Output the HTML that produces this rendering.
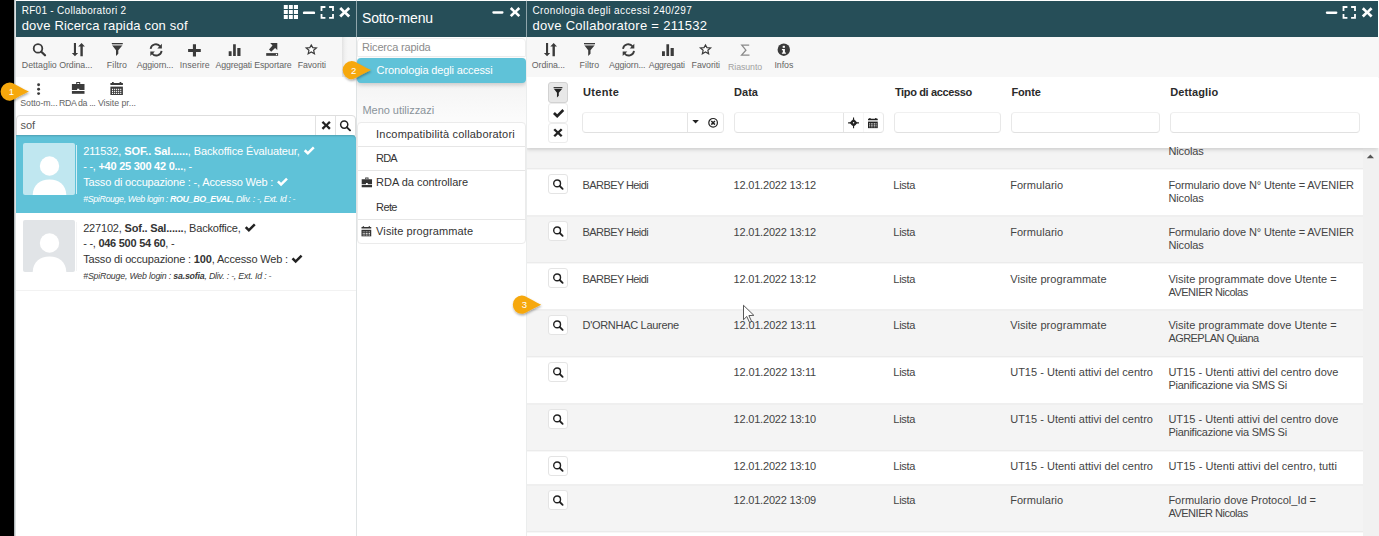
<!DOCTYPE html>
<html>
<head>
<meta charset="utf-8">
<title>Cronologia degli accessi</title>
<style>
*{box-sizing:border-box;margin:0;padding:0}
html,body{width:1379px;height:536px;overflow:hidden;background:#fff;font-family:"Liberation Sans",sans-serif}
#root{position:absolute;left:0;top:0;width:1379px;height:536px;overflow:hidden}
#root>div{position:absolute}
.t{white-space:nowrap;line-height:normal}
.t b{font-weight:700}
#ov{position:absolute;left:0;top:0}
</style>
</head>
<body>
<div id="root">
<div style="left:0px;top:0px;width:14px;height:536px;background:#000;"></div>
<div style="left:14px;top:0px;width:1px;height:536px;background:#b4babc;"></div>
<div style="left:15px;top:0px;width:1px;height:536px;background:#dde1e2;"></div>
<div style="left:16px;top:37px;width:341px;height:499px;background:#fff;"></div>
<div style="left:16px;top:1px;width:340px;height:36px;background:#264e58;"></div>
<div style="left:342px;top:37px;width:14px;height:40px;background:linear-gradient(90deg,#e2e2e2,#f1f1f1 3px,#f6f6f6 6px);"></div>
<div style="left:16px;top:37px;width:326px;height:40px;background:#f7f7f7;"></div>
<div style="left:16px;top:115px;width:340px;height:21px;background:#fff;border:1px solid #dedede;border-radius:4px 4px 0 0;"></div>
<div style="left:315px;top:116px;width:1px;height:19px;background:#e2e2e2;"></div>
<div style="left:335px;top:116px;width:1px;height:19px;background:#e2e2e2;"></div>
<div style="left:16px;top:135px;width:340px;height:78px;background:linear-gradient(#5fc2d8,#5fc2d8);border-radius:0 4px 0 0;box-shadow:inset 0 2px 2px -1px rgba(0,0,0,.18);"></div>
<div style="left:23px;top:143px;width:52px;height:52px;background:#c0e7f0;border-radius:2px;"></div>
<div style="left:76px;top:145px;width:1px;height:49px;background:#d4eef5;"></div>
<div style="left:16px;top:290px;width:340px;height:1px;background:#f2f2f2;"></div>
<div style="left:23px;top:220px;width:52px;height:52px;background:#e1e4e7;border-radius:2px;"></div>
<div style="left:76px;top:222px;width:1px;height:49px;background:#f3f4f5;"></div>
<div style="left:356px;top:0px;width:1px;height:536px;background:#dfe3e4;"></div>
<div style="left:356px;top:1px;width:1px;height:36px;background:#8fa5ab;"></div>
<div style="left:357px;top:1px;width:169px;height:36px;background:#264e58;"></div>
<div style="left:357px;top:82px;width:169px;height:42px;background:linear-gradient(#f4f4f4,#fcfcfc);"></div>
<div style="left:357px;top:38px;width:169px;height:19px;background:#fff;border:1px solid #eeeeee;border-radius:4px 4px 0 0;"></div>
<div style="left:357px;top:58px;width:169px;height:25px;background:#5fc2d8;border-radius:4px;box-shadow:0 2px 4px rgba(0,0,0,.18);"></div>
<div style="left:357px;top:122px;width:169px;height:122px;background:#fff;border:1px solid #ebebeb;border-radius:4px;"></div>
<div style="left:358px;top:146px;width:167px;height:1px;background:#e6e6e6;"></div>
<div style="left:358px;top:170px;width:167px;height:1px;background:#e6e6e6;"></div>
<div style="left:358px;top:219px;width:167px;height:1px;background:#e6e6e6;"></div>
<div style="left:526px;top:0px;width:1px;height:536px;background:#ebeded;"></div>
<div style="left:526px;top:1px;width:1px;height:36px;background:#8fa5ab;"></div>
<div style="left:527px;top:1px;width:851px;height:36px;background:#264e58;"></div>
<div style="left:527px;top:37px;width:852px;height:41px;background:#f7f7f7;"></div>
<div style="left:527px;top:148px;width:836px;height:20px;background:#f4f4f4;border-top:2px solid #efefef;"></div>
<div style="left:527px;top:168px;width:836px;height:47px;background:#fff;border-top:1px solid #ebebeb;box-shadow:inset 0 1px 0 #f7f7f7;"></div>
<div style="left:527px;top:215px;width:836px;height:47px;background:#f4f4f4;border-top:2px solid #efefef;"></div>
<div style="left:527px;top:262px;width:836px;height:47px;background:#fff;border-top:1px solid #ebebeb;box-shadow:inset 0 1px 0 #f7f7f7;"></div>
<div style="left:527px;top:309px;width:836px;height:47px;background:#f4f4f4;border-top:2px solid #efefef;"></div>
<div style="left:527px;top:356px;width:836px;height:47px;background:#fff;border-top:1px solid #ebebeb;box-shadow:inset 0 1px 0 #f7f7f7;"></div>
<div style="left:527px;top:403px;width:836px;height:47px;background:#f4f4f4;border-top:2px solid #efefef;"></div>
<div style="left:527px;top:450px;width:836px;height:34px;background:#fff;border-top:1px solid #ebebeb;box-shadow:inset 0 1px 0 #f7f7f7;"></div>
<div style="left:527px;top:484px;width:836px;height:47px;background:#f4f4f4;border-top:2px solid #efefef;"></div>
<div style="left:527px;top:531px;width:836px;height:5px;background:#fff;border-top:1px solid #ebebeb;box-shadow:inset 0 1px 0 #f7f7f7;"></div>
<div style="left:1363px;top:148px;width:16px;height:388px;background:#f1f1f1;"></div>
<div style="left:548px;top:174px;width:20px;height:20px;background:#fff;border:1px solid #e4e4e4;border-radius:3px;"></div>
<div style="left:548px;top:221px;width:20px;height:20px;background:#fff;border:1px solid #e4e4e4;border-radius:3px;"></div>
<div style="left:548px;top:268px;width:20px;height:20px;background:#fff;border:1px solid #e4e4e4;border-radius:3px;"></div>
<div style="left:548px;top:315px;width:20px;height:20px;background:#fff;border:1px solid #e4e4e4;border-radius:3px;"></div>
<div style="left:548px;top:362px;width:20px;height:20px;background:#fff;border:1px solid #e4e4e4;border-radius:3px;"></div>
<div style="left:548px;top:409px;width:20px;height:20px;background:#fff;border:1px solid #e4e4e4;border-radius:3px;"></div>
<div style="left:548px;top:456px;width:20px;height:20px;background:#fff;border:1px solid #e4e4e4;border-radius:3px;"></div>
<div style="left:548px;top:490px;width:20px;height:20px;background:#fff;border:1px solid #e4e4e4;border-radius:3px;"></div>
<div style="left:548px;top:537px;width:20px;height:20px;background:#fff;border:1px solid #e4e4e4;border-radius:3px;"></div>
<div style="left:527px;top:77px;width:851px;height:71px;background:#fff;box-shadow:0 2px 4px rgba(0,0,0,.13);clip-path:inset(0 0 -10px 0);"></div>
<div style="left:548px;top:82px;width:20px;height:21px;background:#e8e8e8;border:1px solid #d2d2d2;border-radius:3px;"></div>
<div style="left:548px;top:103px;width:20px;height:20px;background:#fff;border:1px solid #ececec;border-radius:3px;"></div>
<div style="left:548px;top:123px;width:20px;height:20px;background:#fff;border:1px solid #ececec;border-radius:3px;"></div>
<div style="left:582px;top:112px;width:142px;height:21px;background:#fff;border:1px solid;border-color:#f0f0f0 #e8e8e8 #e1e1e1 #e8e8e8;border-radius:4px;"></div>
<div style="left:687px;top:113px;width:1px;height:19px;background:#e4e4e4;"></div>
<div style="left:734px;top:112px;width:150px;height:21px;background:#fff;border:1px solid;border-color:#f0f0f0 #e8e8e8 #e1e1e1 #e8e8e8;border-radius:4px;"></div>
<div style="left:843px;top:113px;width:1px;height:19px;background:#e4e4e4;"></div>
<div style="left:863px;top:113px;width:1px;height:19px;background:#f6f6f6;"></div>
<div style="left:894px;top:112px;width:107px;height:21px;background:#fff;border:1px solid;border-color:#f0f0f0 #e8e8e8 #e1e1e1 #e8e8e8;border-radius:4px;"></div>
<div style="left:1011px;top:112px;width:149px;height:21px;background:#fff;border:1px solid;border-color:#f0f0f0 #e8e8e8 #e1e1e1 #e8e8e8;border-radius:4px;"></div>
<div style="left:1170px;top:112px;width:190px;height:21px;background:#fff;border:1px solid;border-color:#f0f0f0 #e8e8e8 #e1e1e1 #e8e8e8;border-radius:4px;"></div>
<div class="t" style="left:21.7px;top:5px;font-size:10px;color:#fff;letter-spacing:0.29px;">RF01 - Collaboratori 2</div>
<div class="t" style="left:21.7px;top:18px;font-size:13px;color:#fff;letter-spacing:0.18px;">dove Ricerca rapida con sof</div>
<div class="t" style="left:362.0px;top:10px;font-size:14px;color:#fff;letter-spacing:-0.14px;">Sotto-menu</div>
<div class="t" style="left:532.4px;top:5px;font-size:10px;color:#fff;letter-spacing:0.39px;">Cronologia degli accessi 240/297</div>
<div class="t" style="left:532.4px;top:18px;font-size:13px;color:#fff;letter-spacing:0.29px;">dove Collaboratore = 211532</div>
<div class="t" style="left:21.8px;top:60px;font-size:8.8px;color:#646464;letter-spacing:0.03px;">Dettaglio</div>
<div class="t" style="left:59.2px;top:60px;font-size:8.8px;color:#646464;letter-spacing:-0.07px;">Ordina...</div>
<div class="t" style="left:106.8px;top:60px;font-size:8.8px;color:#646464;letter-spacing:0.13px;">Filtro</div>
<div class="t" style="left:136.7px;top:60px;font-size:8.8px;color:#646464;letter-spacing:-0.11px;">Aggiorn...</div>
<div class="t" style="left:179.8px;top:60px;font-size:8.8px;color:#646464;letter-spacing:0.07px;">Inserire</div>
<div class="t" style="left:215.4px;top:60px;font-size:8.8px;color:#646464;letter-spacing:-0.13px;">Aggregati</div>
<div class="t" style="left:254.2px;top:60px;font-size:8.8px;color:#646464;letter-spacing:-0.08px;">Esportare</div>
<div class="t" style="left:297.7px;top:60px;font-size:8.8px;color:#646464;letter-spacing:-0.08px;">Favoriti</div>
<div class="t" style="left:20.3px;top:98px;font-size:8.8px;color:#646464;letter-spacing:-0.09px;">Sotto-m...</div>
<div class="t" style="left:59.0px;top:98px;font-size:8.8px;color:#646464;letter-spacing:-0.37px;">RDA da ...</div>
<div class="t" style="left:97.9px;top:98px;font-size:8.8px;color:#646464;letter-spacing:-0.03px;">Visite pr...</div>
<div class="t" style="left:531.8px;top:60px;font-size:8.8px;color:#646464;letter-spacing:-0.07px;">Ordina...</div>
<div class="t" style="left:579.6px;top:60px;font-size:8.8px;color:#646464;letter-spacing:0.01px;">Filtro</div>
<div class="t" style="left:609.0px;top:60px;font-size:8.8px;color:#646464;letter-spacing:-0.13px;">Aggiorn...</div>
<div class="t" style="left:648.7px;top:60px;font-size:8.8px;color:#646464;letter-spacing:-0.17px;">Aggregati</div>
<div class="t" style="left:691.6px;top:60px;font-size:8.8px;color:#646464;letter-spacing:-0.06px;">Favoriti</div>
<div class="t" style="left:774.4px;top:60px;font-size:8.8px;color:#646464;letter-spacing:-0.04px;">Infos</div>
<div class="t" style="left:728.0px;top:62px;font-size:8.8px;color:#a2a2a2;letter-spacing:-0.08px;">Riasunto</div>
<div class="t" style="left:20.6px;top:119px;font-size:11px;color:#555;letter-spacing:-0.09px;">sof</div>
<div class="t" style="left:83.2px;top:145px;font-size:11px;color:#fff;letter-spacing:-0.12px;">211532, <b>SOF.. Sal......</b>, Backoffice Évaluateur,</div>
<div class="t" style="left:83.2px;top:160px;font-size:11px;color:#fff;letter-spacing:-0.25px;">- -, <b>+40 25 300 42 0...</b>, -</div>
<div class="t" style="left:83.2px;top:176px;font-size:11px;color:#fff;letter-spacing:-0.17px;">Tasso di occupazione : -, Accesso Web :</div>
<div class="t" style="left:83.2px;top:194px;font-size:8.8px;color:#fff;font-style:italic;letter-spacing:-0.34px;">#SpiRouge, Web login : <b>ROU_BO_EVAL</b>, Dliv. : -, Ext. Id : -</div>
<div class="t" style="left:83.2px;top:222px;font-size:11px;color:#333;letter-spacing:-0.19px;">227102, <b>Sof.. Sal......</b>, Backoffice,</div>
<div class="t" style="left:83.2px;top:237px;font-size:11px;color:#333;letter-spacing:-0.26px;">- -, <b>046 500 54 60</b>, -</div>
<div class="t" style="left:83.2px;top:253px;font-size:11px;color:#333;letter-spacing:-0.16px;">Tasso di occupazione : <b>100</b>, Accesso Web :</div>
<div class="t" style="left:83.2px;top:271px;font-size:8.8px;color:#3a3a3a;font-style:italic;letter-spacing:-0.20px;">#SpiRouge, Web login : <b>sa.sofia</b>, Dliv. : -, Ext. Id : -</div>
<div class="t" style="left:362.0px;top:41px;font-size:11px;color:#8c8c8c;letter-spacing:-0.17px;">Ricerca rapida</div>
<div class="t" style="left:376.6px;top:64px;font-size:11px;color:#fff;letter-spacing:-0.14px;">Cronologia degli accessi</div>
<div class="t" style="left:362.5px;top:104px;font-size:11px;color:#8a949b;letter-spacing:-0.04px;">Meno utilizzazi</div>
<div class="t" style="left:376.1px;top:128px;font-size:11px;color:#333;letter-spacing:0.19px;">Incompatibilità collaboratori</div>
<div class="t" style="left:376.1px;top:152px;font-size:11px;color:#333;letter-spacing:-0.82px;">RDA</div>
<div class="t" style="left:376.1px;top:176px;font-size:11px;color:#333;letter-spacing:-0.02px;">RDA da controllare</div>
<div class="t" style="left:376.1px;top:201px;font-size:11px;color:#333;letter-spacing:-0.62px;">Rete</div>
<div class="t" style="left:376.1px;top:225px;font-size:11px;color:#333;letter-spacing:0.11px;">Visite programmate</div>
<div class="t" style="left:583.0px;top:86px;font-size:11px;color:#2b2b2b;font-weight:700;letter-spacing:0.31px;">Utente</div>
<div class="t" style="left:734.0px;top:86px;font-size:11px;color:#2b2b2b;font-weight:700;letter-spacing:0.05px;">Data</div>
<div class="t" style="left:894.9px;top:86px;font-size:11px;color:#2b2b2b;font-weight:700;letter-spacing:-0.35px;">Tipo di accesso</div>
<div class="t" style="left:1011.5px;top:86px;font-size:11px;color:#2b2b2b;font-weight:700;letter-spacing:-0.16px;">Fonte</div>
<div class="t" style="left:1170.3px;top:86px;font-size:11px;color:#2b2b2b;font-weight:700;letter-spacing:0.10px;">Dettaglio</div>
<div class="t" style="left:582.5px;top:179px;font-size:11px;color:#444;letter-spacing:-0.58px;">BARBEY Heidi</div>
<div class="t" style="left:733.6px;top:179px;font-size:11px;color:#444;letter-spacing:-0.20px;">12.01.2022 13:12</div>
<div class="t" style="left:893.3px;top:179px;font-size:11px;color:#444;letter-spacing:-0.26px;">Lista</div>
<div class="t" style="left:1010.2px;top:179px;font-size:11px;color:#444;letter-spacing:0.05px;">Formulario</div>
<div class="t" style="left:1168.4px;top:179px;font-size:11px;color:#444;letter-spacing:-0.12px;">Formulario dove N° Utente = AVENIER</div>
<div class="t" style="left:1168.4px;top:192px;font-size:11px;color:#444;letter-spacing:-0.13px;">Nicolas</div>
<div class="t" style="left:582.5px;top:226px;font-size:11px;color:#444;letter-spacing:-0.58px;">BARBEY Heidi</div>
<div class="t" style="left:733.6px;top:226px;font-size:11px;color:#444;letter-spacing:-0.20px;">12.01.2022 13:12</div>
<div class="t" style="left:893.3px;top:226px;font-size:11px;color:#444;letter-spacing:-0.26px;">Lista</div>
<div class="t" style="left:1010.2px;top:226px;font-size:11px;color:#444;letter-spacing:0.05px;">Formulario</div>
<div class="t" style="left:1168.4px;top:226px;font-size:11px;color:#444;letter-spacing:-0.12px;">Formulario dove N° Utente = AVENIER</div>
<div class="t" style="left:1168.4px;top:239px;font-size:11px;color:#444;letter-spacing:-0.13px;">Nicolas</div>
<div class="t" style="left:582.5px;top:273px;font-size:11px;color:#444;letter-spacing:-0.58px;">BARBEY Heidi</div>
<div class="t" style="left:733.6px;top:273px;font-size:11px;color:#444;letter-spacing:-0.20px;">12.01.2022 13:12</div>
<div class="t" style="left:893.3px;top:273px;font-size:11px;color:#444;letter-spacing:-0.26px;">Lista</div>
<div class="t" style="left:1010.2px;top:273px;font-size:11px;color:#444;letter-spacing:0.07px;">Visite programmate</div>
<div class="t" style="left:1168.4px;top:273px;font-size:11px;color:#444;letter-spacing:0.04px;">Visite programmate dove Utente =</div>
<div class="t" style="left:1168.4px;top:286px;font-size:11px;color:#444;letter-spacing:-0.49px;">AVENIER Nicolas</div>
<div class="t" style="left:582.5px;top:319px;font-size:11px;color:#444;letter-spacing:-0.30px;">D'ORNHAC Laurene</div>
<div class="t" style="left:733.6px;top:319px;font-size:11px;color:#444;letter-spacing:-0.15px;">12.01.2022 13:11</div>
<div class="t" style="left:893.3px;top:319px;font-size:11px;color:#444;letter-spacing:-0.26px;">Lista</div>
<div class="t" style="left:1010.2px;top:319px;font-size:11px;color:#444;letter-spacing:0.07px;">Visite programmate</div>
<div class="t" style="left:1168.4px;top:319px;font-size:11px;color:#444;letter-spacing:0.04px;">Visite programmate dove Utente =</div>
<div class="t" style="left:1168.4px;top:332px;font-size:11px;color:#444;letter-spacing:-0.55px;">AGREPLAN Quiana</div>
<div class="t" style="left:733.6px;top:366px;font-size:11px;color:#444;letter-spacing:-0.15px;">12.01.2022 13:11</div>
<div class="t" style="left:893.3px;top:366px;font-size:11px;color:#444;letter-spacing:-0.26px;">Lista</div>
<div class="t" style="left:1010.2px;top:366px;font-size:11px;color:#444;letter-spacing:0.01px;">UT15 - Utenti attivi del centro</div>
<div class="t" style="left:1168.4px;top:366px;font-size:11px;color:#444;letter-spacing:0.02px;">UT15 - Utenti attivi del centro dove</div>
<div class="t" style="left:1168.4px;top:379px;font-size:11px;color:#444;letter-spacing:-0.25px;">Pianificazione via SMS Si</div>
<div class="t" style="left:733.6px;top:413px;font-size:11px;color:#444;letter-spacing:-0.20px;">12.01.2022 13:10</div>
<div class="t" style="left:893.3px;top:413px;font-size:11px;color:#444;letter-spacing:-0.26px;">Lista</div>
<div class="t" style="left:1010.2px;top:413px;font-size:11px;color:#444;letter-spacing:0.01px;">UT15 - Utenti attivi del centro</div>
<div class="t" style="left:1168.4px;top:413px;font-size:11px;color:#444;letter-spacing:0.02px;">UT15 - Utenti attivi del centro dove</div>
<div class="t" style="left:1168.4px;top:426px;font-size:11px;color:#444;letter-spacing:-0.25px;">Pianificazione via SMS Si</div>
<div class="t" style="left:733.6px;top:460px;font-size:11px;color:#444;letter-spacing:-0.20px;">12.01.2022 13:10</div>
<div class="t" style="left:893.3px;top:460px;font-size:11px;color:#444;letter-spacing:-0.26px;">Lista</div>
<div class="t" style="left:1010.2px;top:460px;font-size:11px;color:#444;letter-spacing:0.01px;">UT15 - Utenti attivi del centro</div>
<div class="t" style="left:1168.4px;top:460px;font-size:11px;color:#444;letter-spacing:0.06px;">UT15 - Utenti attivi del centro, tutti</div>
<div class="t" style="left:733.6px;top:494px;font-size:11px;color:#444;letter-spacing:-0.20px;">12.01.2022 13:09</div>
<div class="t" style="left:893.3px;top:494px;font-size:11px;color:#444;letter-spacing:-0.26px;">Lista</div>
<div class="t" style="left:1010.2px;top:494px;font-size:11px;color:#444;letter-spacing:0.05px;">Formulario</div>
<div class="t" style="left:1168.4px;top:494px;font-size:11px;color:#444;">Formulario dove Protocol_Id =</div>
<div class="t" style="left:1168.4px;top:507px;font-size:11px;color:#444;letter-spacing:-0.49px;">AVENIER Nicolas</div>
<div class="t" style="left:1168.4px;top:145px;font-size:11px;color:#444;letter-spacing:-0.13px;">Nicolas</div>
<svg id="ov" width="1379" height="536" viewBox="0 0 1379 536">
<defs>
<filter id="bsh" x="-20%" y="-20%" width="150%" height="160%"><feDropShadow dx="0.5" dy="1.5" stdDeviation="1.2" flood-color="#000" flood-opacity="0.35"/></filter>
<clipPath id="avc1"><rect x="0" y="0" width="52" height="52"/></clipPath>
<clipPath id="avc2"><rect x="0" y="0" width="52" height="52"/></clipPath>
</defs>
<g transform="translate(283.80 4.90)" fill="#fff" stroke="#fff" ><g stroke="none"><path d="M0 0h4v4H0zM5.1 0h3.9v4H5.1zM10.1 0h4.1v4h-4.1zM0 5.1h4v3.9H0zM5.1 5.1h3.9v3.9H5.1zM10.1 5.1h4.1v3.9h-4.1zM0 10.1h4v3.9H0zM5.1 10.1h3.9v3.9H5.1zM10.1 10.1h4.1v3.9h-4.1z"/></g></g>
<g transform="translate(302.90 11.30)" fill="#fff" stroke="#fff" ><g stroke="none"><rect x="0" y="0.1" width="12.2" height="2.7" rx="1.2"/></g></g>
<g transform="translate(320.60 6.10)" fill="#fff" stroke="#fff" ><g fill="none" stroke-width="1.8"><path d="M0.9 4.8V0.9h3.9M8.5 0.9h3.9v3.9M12.4 7.9v3.9H8.5M4.8 11.8H0.9V7.9"/></g></g>
<g transform="translate(339.20 7.00)" fill="#fff" stroke="#fff" ><g stroke="none"><path d="M0 2L2 0L5.5 3.5L9 0L11 2L7.5 5.2L11 8.5L9 10.4L5.5 7L2 10.4L0 8.5L3.5 5.2z"/></g></g>
<g transform="translate(492.30 11.10) scale(0.92)" fill="#fff" stroke="#fff" ><g stroke="none"><rect x="0" y="0.1" width="12.2" height="2.7" rx="1.2"/></g></g>
<g transform="translate(509.80 7.10) scale(0.95)" fill="#fff" stroke="#fff" ><g stroke="none"><path d="M0 2L2 0L5.5 3.5L9 0L11 2L7.5 5.2L11 8.5L9 10.4L5.5 7L2 10.4L0 8.5L3.5 5.2z"/></g></g>
<g transform="translate(1325.80 11.30) scale(0.95)" fill="#fff" stroke="#fff" ><g stroke="none"><rect x="0" y="0.1" width="12.2" height="2.7" rx="1.2"/></g></g>
<g transform="translate(1342.60 6.10)" fill="#fff" stroke="#fff" ><g fill="none" stroke-width="1.8"><path d="M0.9 4.8V0.9h3.9M8.5 0.9h3.9v3.9M12.4 7.9v3.9H8.5M4.8 11.8H0.9V7.9"/></g></g>
<g transform="translate(1361.80 7.20) scale(0.98)" fill="#fff" stroke="#fff" ><g stroke="none"><path d="M0 2L2 0L5.5 3.5L9 0L11 2L7.5 5.2L11 8.5L9 10.4L5.5 7L2 10.4L0 8.5L3.5 5.2z"/></g></g>
<g transform="translate(32.80 43.10)" fill="#3b3b3b" stroke="#3b3b3b" ><g><circle cx="5.2" cy="5.3" r="4.3" fill="none" stroke-width="1.8"/><path d="M8.5 8.6L12.2 12.2" fill="none" stroke-width="2.3" stroke-linecap="round"/></g></g>
<g transform="translate(71.90 43.00)" fill="#3b3b3b" stroke="#3b3b3b" ><g stroke="none"><path d="M2 0.1h2.1v9.8h2.1L3.05 13.2L-0.1 9.9H2z"/><path d="M8.5 13.2V3.6H6.3L9.65 0L13 3.6h-2.1v9.6z"/></g></g>
<g transform="translate(111.80 43.00)" fill="#3b3b3b" stroke="#3b3b3b" ><g stroke="none"><path d="M0 0h11v1.1H0z"/><path d="M0.2 1.1h10.6v1.3H0.2z" opacity=".3"/><path d="M0.5 2.4h10L6.5 7.2v3.6L4.2 13V7.2z"/></g></g>
<g transform="translate(149.60 43.60)" fill="#3b3b3b" stroke="#3b3b3b" ><g fill="none" stroke-width="1.8"><path d="M1 5.2A5.3 5.3 0 0 1 10.6 3"/><path d="M12 7.2A5.3 5.3 0 0 1 2.4 9.6"/><path d="M12.3 0.2v4.6H7.7z" stroke="none" fill="#3b3b3b"/><path d="M0.7 12.4V7.8h4.6z" stroke="none" fill="#3b3b3b"/></g></g>
<g transform="translate(188.10 44.30)" fill="#3b3b3b" stroke="#3b3b3b" ><g stroke="none"><path d="M4.8 0h3.1v4.7h4.8v3H7.9v4.6H4.8V7.7H0v-3h4.8z"/></g></g>
<g transform="translate(228.50 44.30)" fill="#3b3b3b" stroke="#3b3b3b" ><g stroke="none"><path d="M0.2 7h2.9v4.8H0.2zM4.6 0h2.7v11.8H4.6zM8.8 3.6h3.2v8.2H8.8z"/></g></g>
<g transform="translate(266.20 43.00)" fill="#3b3b3b" stroke="#3b3b3b" ><g stroke="none"><path d="M4 0h7.1v7.1L8.9 4.9L5 8.8L2.8 6.6L6.3 2.6z"/><path d="M0 10.1h11.9v2.7H0z"/><circle cx="10.3" cy="11.45" r="0.7" fill="#fff"/></g></g>
<g transform="translate(305.10 43.30)" fill="#3b3b3b" stroke="#3b3b3b" ><g><path d="M6.2 1.7l1.45 2.6l3.65 0.35l-2.75 2.35l0.8 3.55L6.2 8.7l-3.15 1.85l0.8-3.55L1.1 4.65l3.65-0.35z" fill="#fff" stroke-width="1.2" stroke-linejoin="miter"/></g></g>
<g transform="translate(37.00 83.10)" fill="#3b3b3b" stroke="#3b3b3b" ><g stroke="none"><circle cx="1.6" cy="1.7" r="1.45"/><circle cx="1.6" cy="6.1" r="1.45"/><circle cx="1.6" cy="10.5" r="1.45"/></g></g>
<g transform="translate(71.90 82.00)" fill="#3b3b3b" stroke="#3b3b3b" ><g stroke="none"><path d="M0 2.1h12.6v6H7.4V6.7H5.2v1.4H0z"/><path d="M0 9h12.6v2.8H0z"/><path d="M4.3 2.1V0h4v2.1h-1V1h-2v1.1z"/></g></g>
<g transform="translate(110.40 82.00)" fill="#3b3b3b" stroke="#3b3b3b" ><g stroke="none"><path d="M0 0.9h1.6V0h1.7v0.9h5.9V0h1.7v0.9h1.6v2.1H0z"/><path d="M0 4.6h12.5V13H0z"/><g fill="#fff"><path d="M1.6 6.8h1.1v1.1H1.6zM3.7 6.8h1.1v1.1H3.7zM5.7 6.8h1.1v1.1H5.7zM7.7 6.8h1.1v1.1H7.7zM9.8 6.8h1.1v1.1H9.8zM1.6 8.8h1.1v1.1H1.6zM3.7 8.8h1.1v1.1H3.7zM5.7 8.8h1.1v1.1H5.7zM7.7 8.8h1.1v1.1H7.7zM9.8 8.8h1.1v1.1H9.8zM1.6 10.8h1.1v1.1H1.6zM3.7 10.8h1.1v1.1H3.7zM5.7 10.8h1.1v1.1H5.7zM7.7 10.8h1.1v1.1H7.7zM9.8 10.8h1.1v1.1H9.8z"/></g></g></g>
<g transform="translate(544.00 43.00)" fill="#3b3b3b" stroke="#3b3b3b" ><g stroke="none"><path d="M2 0.1h2.1v9.8h2.1L3.05 13.2L-0.1 9.9H2z"/><path d="M8.5 13.2V3.6H6.3L9.65 0L13 3.6h-2.1v9.6z"/></g></g>
<g transform="translate(584.00 43.00)" fill="#3b3b3b" stroke="#3b3b3b" ><g stroke="none"><path d="M0 0h11v1.1H0z"/><path d="M0.2 1.1h10.6v1.3H0.2z" opacity=".3"/><path d="M0.5 2.4h10L6.5 7.2v3.6L4.2 13V7.2z"/></g></g>
<g transform="translate(622.00 43.60)" fill="#3b3b3b" stroke="#3b3b3b" ><g fill="none" stroke-width="1.8"><path d="M1 5.2A5.3 5.3 0 0 1 10.6 3"/><path d="M12 7.2A5.3 5.3 0 0 1 2.4 9.6"/><path d="M12.3 0.2v4.6H7.7z" stroke="none" fill="#3b3b3b"/><path d="M0.7 12.4V7.8h4.6z" stroke="none" fill="#3b3b3b"/></g></g>
<g transform="translate(661.80 44.30)" fill="#3b3b3b" stroke="#3b3b3b" ><g stroke="none"><path d="M0.2 7h2.9v4.8H0.2zM4.6 0h2.7v11.8H4.6zM8.8 3.6h3.2v8.2H8.8z"/></g></g>
<g transform="translate(699.30 43.30)" fill="#3b3b3b" stroke="#3b3b3b" ><g><path d="M6.2 1.7l1.45 2.6l3.65 0.35l-2.75 2.35l0.8 3.55L6.2 8.7l-3.15 1.85l0.8-3.55L1.1 4.65l3.65-0.35z" fill="#fff" stroke-width="1.2" stroke-linejoin="miter"/></g></g>
<g transform="translate(740.40 44.50)" fill="#8a8a8a" stroke="#8a8a8a" ><g fill="none" stroke-width="1.3"><path d="M8.8 0.7H1.4L5.5 5.7L1.2 10.6H9.1"/></g></g>
<g transform="translate(777.60 43.50)" fill="#3b3b3b" stroke="#3b3b3b" ><g stroke="none"><circle cx="6.2" cy="6.2" r="6.2"/><g fill="#fff"><rect x="5.1" y="2.3" width="2.2" height="2"/><path d="M4.3 5.4h3v3.5h1v1.3H4.3V8.9h1V6.7h-1z"/></g></g></g>
<g transform="translate(321.60 121.00) scale(0.83)" fill="#222" stroke="#222" ><g stroke="none"><path d="M0 2L2 0L5.5 3.5L9 0L11 2L7.5 5.2L11 8.5L9 10.4L5.5 7L2 10.4L0 8.5L3.5 5.2z"/></g></g>
<g transform="translate(339.90 120.20) scale(0.83)" fill="#222" stroke="#222" ><g><circle cx="5.2" cy="5.3" r="4.3" fill="none" stroke-width="1.8"/><path d="M8.5 8.6L12.2 12.2" fill="none" stroke-width="2.3" stroke-linecap="round"/></g></g>
<g transform="translate(303.80 146.00) scale(0.97)" fill="#fff" stroke="#fff" ><g stroke="none"><path d="M0 5.3L1.9 3.4L4.2 5.7L9.4 0.5L11.2 2.3L4.2 9.3z"/></g></g>
<g transform="translate(277.00 177.20) scale(0.97)" fill="#fff" stroke="#fff" ><g stroke="none"><path d="M0 5.3L1.9 3.4L4.2 5.7L9.4 0.5L11.2 2.3L4.2 9.3z"/></g></g>
<g transform="translate(244.80 222.90) scale(0.97)" fill="#222" stroke="#222" ><g stroke="none"><path d="M0 5.3L1.9 3.4L4.2 5.7L9.4 0.5L11.2 2.3L4.2 9.3z"/></g></g>
<g transform="translate(291.60 254.20) scale(0.97)" fill="#222" stroke="#222" ><g stroke="none"><path d="M0 5.3L1.9 3.4L4.2 5.7L9.4 0.5L11.2 2.3L4.2 9.3z"/></g></g>
<g transform="translate(361.70 177.60) scale(0.82)" fill="#333" stroke="#333" ><g stroke="none"><path d="M0 2.1h12.6v6H7.4V6.7H5.2v1.4H0z"/><path d="M0 9h12.6v2.8H0z"/><path d="M4.3 2.1V0h4v2.1h-1V1h-2v1.1z"/></g></g>
<g transform="translate(361.50 226.20) scale(0.78)" fill="#333" stroke="#333" ><g stroke="none"><path d="M0 0.9h1.6V0h1.7v0.9h5.9V0h1.7v0.9h1.6v2.1H0z"/><path d="M0 4.6h12.5V13H0z"/><g fill="#fff"><path d="M1.6 6.8h1.1v1.1H1.6zM3.7 6.8h1.1v1.1H3.7zM5.7 6.8h1.1v1.1H5.7zM7.7 6.8h1.1v1.1H7.7zM9.8 6.8h1.1v1.1H9.8zM1.6 8.8h1.1v1.1H1.6zM3.7 8.8h1.1v1.1H3.7zM5.7 8.8h1.1v1.1H5.7zM7.7 8.8h1.1v1.1H7.7zM9.8 8.8h1.1v1.1H9.8zM1.6 10.8h1.1v1.1H1.6zM3.7 10.8h1.1v1.1H3.7zM5.7 10.8h1.1v1.1H5.7zM7.7 10.8h1.1v1.1H7.7zM9.8 10.8h1.1v1.1H9.8z"/></g></g></g>
<g transform="translate(553.60 87.10) scale(0.8)" fill="#222" stroke="#222" ><g stroke="none"><path d="M0 0h11v1.1H0z"/><path d="M0.2 1.1h10.6v1.3H0.2z" opacity=".3"/><path d="M0.5 2.4h10L6.5 7.2v3.6L4.2 13V7.2z"/></g></g>
<g transform="translate(553.00 108.60)" fill="#222" stroke="#222" ><g stroke="none"><path d="M0 5.3L1.9 3.4L4.2 5.7L9.4 0.5L11.2 2.3L4.2 9.3z"/></g></g>
<g transform="translate(553.40 128.40) scale(0.83)" fill="#222" stroke="#222" ><g stroke="none"><path d="M0 2L2 0L5.5 3.5L9 0L11 2L7.5 5.2L11 8.5L9 10.4L5.5 7L2 10.4L0 8.5L3.5 5.2z"/></g></g>
<g transform="translate(692.30 120.00)" fill="#222" stroke="#222" ><g stroke="none"><path d="M0 0h6.6L3.3 3.6z"/></g></g>
<g transform="translate(708.20 117.90)" fill="#222" stroke="#222" ><g><circle cx="4.9" cy="4.9" r="4.3" fill="none" stroke-width="1.2"/><path d="M3.1 3.1L6.7 6.7M6.7 3.1L3.1 6.7" fill="none" stroke-width="1.5"/></g></g>
<g transform="translate(848.10 117.40)" fill="#222" stroke="#222" ><g stroke="none"><path d="M4.9 0h1.1v4.9h4.9v1.1H6v4.9H4.9V6H0V4.9h4.9z"/><path d="M5.45 1.7L7.5 3.4L9.2 5.45L7.5 7.5L5.45 9.2L3.4 7.5L1.7 5.45L3.4 3.4z"/><circle cx="5.45" cy="5.45" r="0.75" fill="#fff"/></g></g>
<g transform="translate(868.00 118.00) scale(0.78)" fill="#222" stroke="#222" ><g stroke="none"><path d="M0 0.9h1.6V0h1.7v0.9h5.9V0h1.7v0.9h1.6v2.1H0z"/><path d="M0 4.6h12.5V13H0z"/><g fill="#fff"><path d="M1.6 6.8h1.1v1.1H1.6zM3.7 6.8h1.1v1.1H3.7zM5.7 6.8h1.1v1.1H5.7zM7.7 6.8h1.1v1.1H7.7zM9.8 6.8h1.1v1.1H9.8zM1.6 8.8h1.1v1.1H1.6zM3.7 8.8h1.1v1.1H3.7zM5.7 8.8h1.1v1.1H5.7zM7.7 8.8h1.1v1.1H7.7zM9.8 8.8h1.1v1.1H9.8zM1.6 10.8h1.1v1.1H1.6zM3.7 10.8h1.1v1.1H3.7zM5.7 10.8h1.1v1.1H5.7zM7.7 10.8h1.1v1.1H7.7zM9.8 10.8h1.1v1.1H9.8z"/></g></g></g>
<g transform="translate(553.00 179.20) scale(0.79)" fill="#222" stroke="#222" ><g><circle cx="5.2" cy="5.3" r="4.3" fill="none" stroke-width="1.8"/><path d="M8.5 8.6L12.2 12.2" fill="none" stroke-width="2.3" stroke-linecap="round"/></g></g>
<g transform="translate(553.00 226.20) scale(0.79)" fill="#222" stroke="#222" ><g><circle cx="5.2" cy="5.3" r="4.3" fill="none" stroke-width="1.8"/><path d="M8.5 8.6L12.2 12.2" fill="none" stroke-width="2.3" stroke-linecap="round"/></g></g>
<g transform="translate(553.00 273.20) scale(0.79)" fill="#222" stroke="#222" ><g><circle cx="5.2" cy="5.3" r="4.3" fill="none" stroke-width="1.8"/><path d="M8.5 8.6L12.2 12.2" fill="none" stroke-width="2.3" stroke-linecap="round"/></g></g>
<g transform="translate(553.00 320.20) scale(0.79)" fill="#222" stroke="#222" ><g><circle cx="5.2" cy="5.3" r="4.3" fill="none" stroke-width="1.8"/><path d="M8.5 8.6L12.2 12.2" fill="none" stroke-width="2.3" stroke-linecap="round"/></g></g>
<g transform="translate(553.00 367.20) scale(0.79)" fill="#222" stroke="#222" ><g><circle cx="5.2" cy="5.3" r="4.3" fill="none" stroke-width="1.8"/><path d="M8.5 8.6L12.2 12.2" fill="none" stroke-width="2.3" stroke-linecap="round"/></g></g>
<g transform="translate(553.00 414.20) scale(0.79)" fill="#222" stroke="#222" ><g><circle cx="5.2" cy="5.3" r="4.3" fill="none" stroke-width="1.8"/><path d="M8.5 8.6L12.2 12.2" fill="none" stroke-width="2.3" stroke-linecap="round"/></g></g>
<g transform="translate(553.00 461.20) scale(0.79)" fill="#222" stroke="#222" ><g><circle cx="5.2" cy="5.3" r="4.3" fill="none" stroke-width="1.8"/><path d="M8.5 8.6L12.2 12.2" fill="none" stroke-width="2.3" stroke-linecap="round"/></g></g>
<g transform="translate(553.00 495.20) scale(0.79)" fill="#222" stroke="#222" ><g><circle cx="5.2" cy="5.3" r="4.3" fill="none" stroke-width="1.8"/><path d="M8.5 8.6L12.2 12.2" fill="none" stroke-width="2.3" stroke-linecap="round"/></g></g>
<g transform="translate(553.00 542.20) scale(0.79)" fill="#222" stroke="#222" ><g><circle cx="5.2" cy="5.3" r="4.3" fill="none" stroke-width="1.8"/><path d="M8.5 8.6L12.2 12.2" fill="none" stroke-width="2.3" stroke-linecap="round"/></g></g>
<g transform="translate(1366.80 154.40)" fill="#555" stroke="#555" ><g stroke="none"><path d="M0 3.8L3.6 0L7.2 3.8z"/></g></g>
<g transform="translate(23.00 143.00)" fill="#fff" stroke="#fff" clip-path="url(#avc1)"><g stroke="none"><circle cx="26.5" cy="23" r="9.7"/><path d="M9.7 52.5c0-10 7-16 16.8-16s16.8 6 16.8 16z"/></g></g>
<g transform="translate(23.00 220.00)" fill="#fff" stroke="#fff" clip-path="url(#avc2)"><g stroke="none"><circle cx="26.5" cy="23" r="9.7"/><path d="M9.7 52.5c0-10 7-16 16.8-16s16.8 6 16.8 16z"/></g></g>
<g transform="translate(0.60 82.50)" fill="#f6a80c" stroke="#f6a80c" filter="url(#bsh)"><g stroke="none"><path d="M9.1 0A9.1 9.1 0 1 0 9.1 18.2C12.5 18.2 15.5 15.3 28.3 9.1C15.5 3 12.5 0 9.1 0z"/></g></g>
<g transform="translate(342.70 61.00)" fill="#f6a80c" stroke="#f6a80c" filter="url(#bsh)"><g stroke="none"><path d="M9.1 0A9.1 9.1 0 1 0 9.1 18.2C12.5 18.2 15.5 15.3 28.3 9.1C15.5 3 12.5 0 9.1 0z"/></g></g>
<g transform="translate(512.80 295.60)" fill="#f6a80c" stroke="#f6a80c" filter="url(#bsh)"><g stroke="none"><path d="M9.1 0A9.1 9.1 0 1 0 9.1 18.2C12.5 18.2 15.5 15.3 28.3 9.1C15.5 3 12.5 0 9.1 0z"/></g></g>
<path d="M743.5 305.3v14.4l3.3-3.2l2.7 5.9l2.1-1l-2.7-5.8l4.9-0.3z" fill="#fff" stroke="#222" stroke-width="0.75" stroke-linejoin="round"/>
</svg>
<div class="t" style="left:8.8px;top:86px;font-size:9.5px;color:#fff;">1</div>
<div class="t" style="left:351.0px;top:65px;font-size:9.5px;color:#fff;">2</div>
<div class="t" style="left:521.7px;top:299px;font-size:9.5px;color:#fff;">3</div>
</div>
</body>
</html>
